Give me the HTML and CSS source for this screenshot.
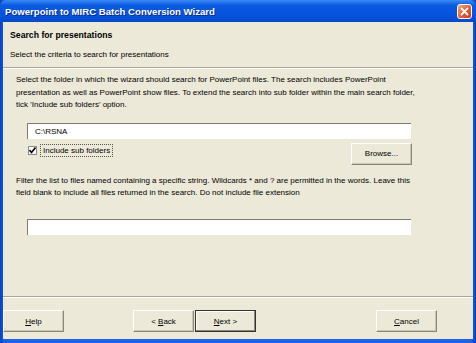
FILE: index.html
```html
<!DOCTYPE html>
<html lang="en">
<head>
    <meta charset="UTF-8">
    <title>Powerpoint to MIRC Batch Conversion Wizard</title>
    <link rel="stylesheet" href="styles.css">
</head>
<body>
    <div class="window">
        <div class="titlebar">
            <span class="title">Powerpoint to MIRC Batch Conversion Wizard</span>
            <span class="close">
                <svg width="13" height="13" viewBox="0 0 13 13">
                    <path d="M3.5 3.5 L9.5 9.5 M9.5 3.5 L3.5 9.5" stroke="#fff" stroke-width="1.8" stroke-linecap="round"/>
                </svg>
            </span>
        </div>
        <div class="frame">
            <div class="header">
                <div class="heading">Search for presentations</div>
                <div class="subheading">Select the criteria to search for presentations</div>
            </div>
            <div class="content">
                <p class="info">Select the folder in which the wizard should search for PowerPoint files. The search includes PowerPoint<br>presentation as well as PowerPoint show files. To extend the search into sub folder within the main search folder,<br>tick 'Include sub folders' option.</p>
                <div class="field">C:\RSNA</div>
                <div class="check-row">
                    <label class="check">
                        <span class="box">
                            <svg width="7" height="7" viewBox="0 0 7 7"><path d="M0.5 3 L2.5 5.5 L6.5 0.5" stroke="#000" stroke-width="1.6" fill="none"/></svg>
                        </span>
                        <span class="check-label">Include sub folders</span>
                    </label>
                    <button class="btn">Browse...</button>
                </div>
                <p class="info filter">Filter the list to files named containing a specific string. Wildcards * and ? are permitted in the words. Leave this<br>field blank to include all files returned in the search. Do not include file extension</p>
                <div class="field empty"></div>
            </div>
            <div class="footer">
                <button class="btn"><u>H</u>elp</button>
                <div class="nav">
                    <button class="btn">&lt; <u>B</u>ack</button>
                    <button class="btn default"><u>N</u>ext &gt;</button>
                </div>
                <button class="btn cancel"><u>C</u>ancel</button>
            </div>
        </div>
    </div>
</body>
</html>
```

FILE: styles.css
```css
* {
    box-sizing: border-box;
}
body {
    margin: 0;
    font-family: "Liberation Sans", Arial, sans-serif;
    font-size: 8px;
    color: #000;
}
.window {
    width: 476px;
    height: 343px;
    display: flex;
    flex-direction: column;
    background: linear-gradient(90deg, #0840c0, #1a62e8 1%, #1a62e8 99%, #0840c0);
}
.titlebar {
    height: 22px;
    display: flex;
    align-items: center;
    justify-content: space-between;
    padding: 0 4px 0 5px;
    background: linear-gradient(#3a8af5, #0a5ae0 25%, #0552dc 70%, #0848c8);
    border-radius: 6px 6px 0 0;
}
.title {
    color: #fff;
    font-weight: bold;
    font-size: 9.6px;
    font-family: "Liberation Sans", sans-serif;
    text-shadow: 1px 1px 0 #0a2a8a;
}
.close {
    width: 15px;
    height: 15px;
    border-radius: 3px;
    border: 1px solid #fff;
    background: linear-gradient(135deg, #f4a888, #e25a32 55%, #c8401c);
    display: flex;
}
.frame {
    flex: 1;
    margin: 0 3px 4px 3px;
    background: #ece9d8;
    display: flex;
    flex-direction: column;
}
.header {
    height: 46px;
    padding: 0 0 0 7px;
    border-bottom: 1px solid #aca899;
    box-shadow: 0 1px 0 #fff;
}
.heading {
    font-weight: bold;
    font-size: 8.7px;
    margin-top: 8px;
}
.subheading {
    margin-top: 10px;
}
.content {
    flex: 1;
    padding: 6px 0 0 13px;
}
.info {
    margin: 0;
    line-height: 12.5px;
    white-space: nowrap;
}
.field {
    width: 384px;
    height: 16px;
    margin: 11px 0 0 11px;
    background: #fff;
    border-top: 1px solid #7f7b6e;
    border-left: 1px solid #7f7b6e;
    padding-left: 7px;
    line-height: 15px;
}
.field.empty {
    margin-top: 19px;
}
.check-row {
    width: 384px;
    display: flex;
    justify-content: space-between;
    align-items: flex-start;
    margin: 4px 0 0 12px;
}
.check {
    display: flex;
    align-items: center;
    gap: 3px;
    margin-top: 1px;
}
.box {
    width: 9px;
    height: 9px;
    background: #fff;
    border: 1px solid #8a8a8a;
    display: flex;
    align-items: center;
    justify-content: center;
}
.check-label {
    border: 1px dotted #555;
    padding: 1px 2px;
}
.btn {
    font-family: "Liberation Sans", Arial, sans-serif;
    font-size: 8px;
    height: 22px;
    width: 61px;
    padding: 0;
    background: #ece9d8;
    border: 1px solid;
    border-color: #fff #8a877a #8a877a #fff;
    box-shadow: inset -1px -1px 0 #c9c6b8;
    color: #000;
}
.filter {
    margin-top: 10px;
}
.footer {
    height: 43px;
    border-top: 1px solid #aca899;
    box-shadow: inset 0 1px 0 #fff;
    display: flex;
    align-items: flex-start;
    padding-top: 13px;
}
.nav {
    display: flex;
    gap: 1px;
    margin-left: 69px;
}
.cancel {
    margin-left: 120px;
}
.btn.default {
    border: 1px solid #333;
    box-shadow: inset -1px -1px 0 #8a877a, inset 1px 1px 0 #fff;
}
```
